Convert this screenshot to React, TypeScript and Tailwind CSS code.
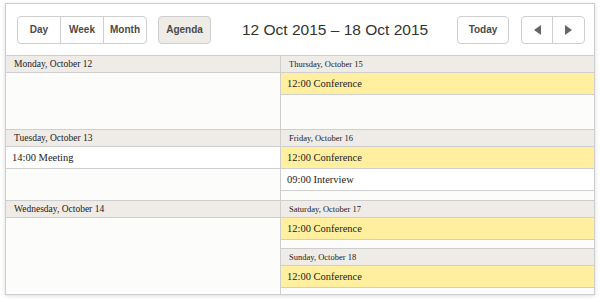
import React from 'react';

type Day = { label: string; events: { time: string; text: string; hi?: boolean }[] };

const serif = 'font-[Liberation_Serif,Times_New_Roman,serif]';

const DayBlock = ({ day, small, className = '' }: { day: Day; small?: boolean; className?: string }) => (
  <div className={`flex flex-col ${className}`}>
    <div
      className={`h-[17px] shrink-0 border-b border-[#cfcfcf] bg-[#efebe6] pl-[8px] leading-[16px] text-[#222] ${serif} ${
        small ? 'text-[8.5px]' : 'text-[9.5px]'
      }`}
    >
      {day.label}
    </div>
    {day.events.map((ev) => (
      <div
        key={ev.time + ev.text}
        className={`h-[22px] shrink-0 border-b border-[#cfcfcf] pl-[6px] leading-[21px] text-[10.5px] text-[#222] ${serif} ${
          ev.hi ? 'bg-[#ffef9f]' : 'bg-white'
        }`}
      >
        {ev.time} {ev.text}
      </div>
    ))}
    <div className="flex-1 bg-[#fcfcfa]" />
  </div>
);

const conf = { time: '12:00', text: 'Conference', hi: true };

const App = () => {
  const mon: Day = { label: 'Monday, October 12', events: [] };
  const tue: Day = { label: 'Tuesday, October 13', events: [{ time: '14:00', text: 'Meeting' }] };
  const wed: Day = { label: 'Wednesday, October 14', events: [] };
  const thu: Day = { label: 'Thursday, October 15', events: [conf] };
  const fri: Day = { label: 'Friday, October 16', events: [conf, { time: '09:00', text: 'Interview' }] };
  const sat: Day = { label: 'Saturday, October 17', events: [conf] };
  const sun: Day = { label: 'Sunday, October 18', events: [conf] };

  const btn = 'flex items-center justify-center text-[10px] font-bold text-[#4a4a4a] font-[Liberation_Sans,Arial,sans-serif]';

  return (
    <div className="h-[302px] w-[600px] bg-white pl-[5px] pt-[3px]">
      <div className="flex h-[292px] w-[590px] flex-col border border-[#cecece] bg-white shadow-[0_1px_4px_rgba(0,0,0,0.15)]">
        {/* toolbar */}
        <div className="flex h-[52px] shrink-0 items-center border-b border-[#cecece] pl-[11px] pr-[9px]">
          <div className="flex h-[28px] w-[130px] rounded-[4px] border border-[#cfcfcf]">
            <div className={`${btn} w-[43px] border-r border-[#cfcfcf]`}>Day</div>
            <div className={`${btn} w-[43px] border-r border-[#cfcfcf]`}>Week</div>
            <div className={`${btn} flex-1`}>Month</div>
          </div>
          <div className={`${btn} ml-[11px] h-[28px] w-[53px] rounded-[4px] border border-[#cfcfcf] bg-[#efebe6]`}>
            Agenda
          </div>
          <div className="ml-[31px] text-[15.5px] text-[#333] font-[Liberation_Sans,Arial,sans-serif]">
            12 Oct 2015 – 18 Oct 2015
          </div>
          <div className="flex-1" />
          <div className={`${btn} h-[28px] w-[52px] rounded-[4px] border border-[#cfcfcf]`}>Today</div>
          <div className="ml-[12px] flex h-[28px] w-[64px] rounded-[4px] border border-[#cfcfcf]">
            <div className="flex w-[31px] items-center justify-center border-r border-[#cfcfcf]">
              <svg width="7" height="10" viewBox="0 0 7 10">
                <path d="M7 0 L0 5 L7 10 Z" fill="#666" />
              </svg>
            </div>
            <div className="flex flex-1 items-center justify-center">
              <svg width="7" height="10" viewBox="0 0 7 10">
                <path d="M0 0 L7 5 L0 10 Z" fill="#666" />
              </svg>
            </div>
          </div>
        </div>

        {/* agenda grid */}
        <div className="grid flex-1 grid-cols-[275px_1fr] grid-rows-[74px_71px_1fr]">
          <DayBlock day={mon} className="border-b border-r border-[#cecece]" />
          <DayBlock day={thu} small className="border-b border-[#cecece]" />
          <DayBlock day={tue} className="border-b border-r border-[#cecece]" />
          <DayBlock day={fri} small className="border-b border-[#cecece]" />
          <DayBlock day={wed} className="border-r border-[#cecece]" />
          <div className="flex flex-col">
            <DayBlock day={sat} small className="h-[48px] shrink-0 border-b border-[#cecece]" />
            <DayBlock day={sun} small className="flex-1" />
          </div>
        </div>
      </div>
    </div>
  );
};

export default App;
